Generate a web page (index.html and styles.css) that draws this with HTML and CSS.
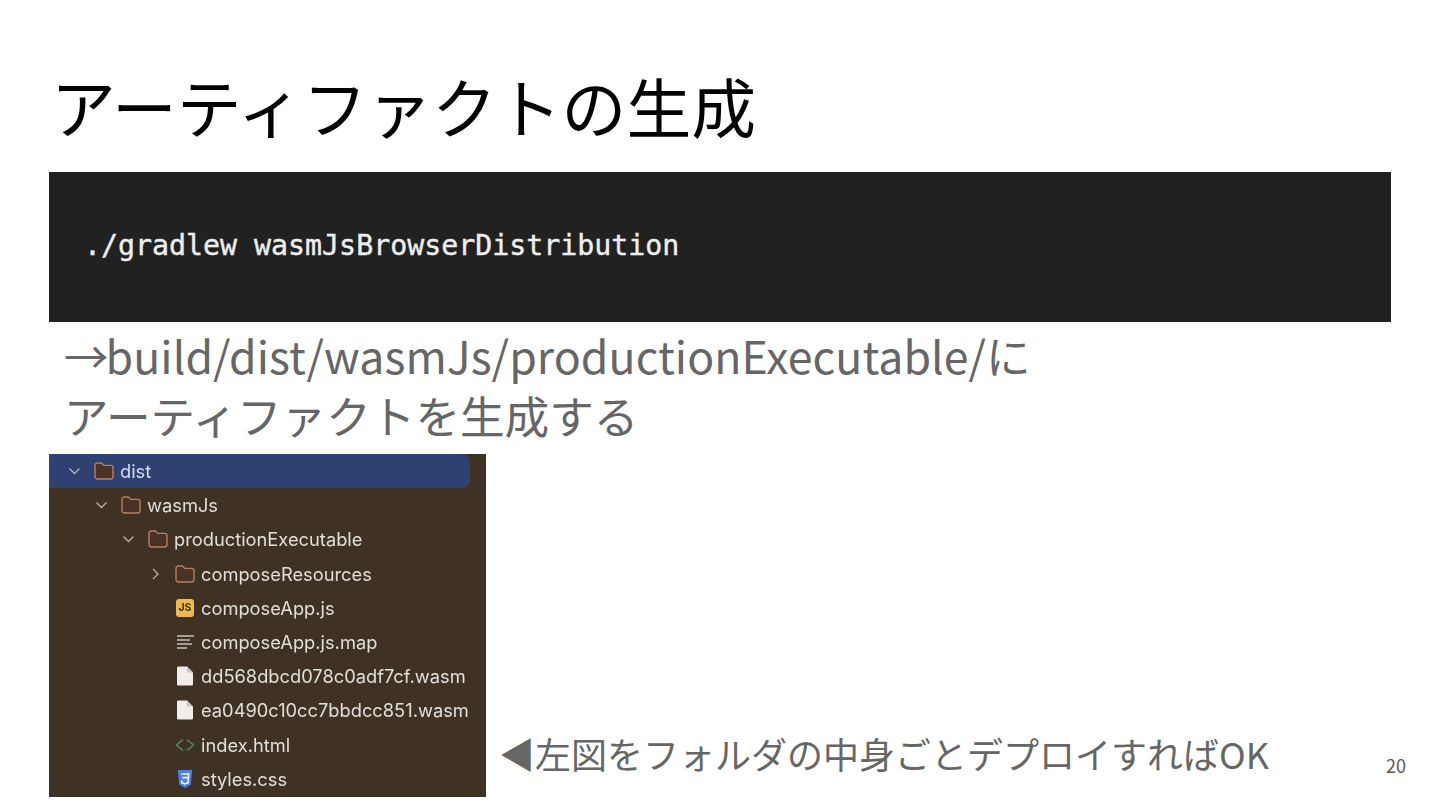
FILE: index.html
```html
<!DOCTYPE html>
<html lang="ja">
<head>
<meta charset="utf-8">
<title>アーティファクトの生成</title>
<link rel="stylesheet" href="styles.css">
</head>
<body>
<svg class="defs" width="0" height="0" aria-hidden="true">
  <defs>
    <symbol id="folder" viewBox="0 0 20 18"><path d="M1 3.500C1 2.100 2 1 3.400 1H7.400L9.800 3.400H16.800C18.200 3.400 19 4.400 19 5.600V14.600C19 16 18.200 17 16.800 17H3.400C2 17 1 16 1 14.600Z" fill="#4a3226" stroke="#b87f5f" stroke-width="1.400"/></symbol>
    <symbol id="down" viewBox="0 0 12 8"><path d="M1 1.500L6 6.500L11 1.500" fill="none" stroke="#b5b3ad" stroke-width="1.300"/></symbol>
    <symbol id="right" viewBox="0 0 8 12"><path d="M1.500 1L6.500 6L1.500 11" fill="none" stroke="#b5b3ad" stroke-width="1.300"/></symbol>
    <symbol id="file" viewBox="0 0 18 20" preserveAspectRatio="none"><path d="M1 2C1 1 1.600 .5 2.500 .5H11L17 6.500V18C17 19 16.400 19.500 15.500 19.500H2.500C1.600 19.500 1 19 1 18Z" fill="#efeeea"/><path d="M11 .5V6.500H17Z" fill="#c9c7c2"/></symbol>
  </defs>
</svg>
<main class="slide">
  <h1 class="title">アーティファクトの生成</h1>
  <div class="code"><code>./gradlew wasmJsBrowserDistribution</code></div>
  <p class="note">→<span class="path">build/dist/wasmJs/productionExecutable/</span>に<br>アーティファクトを生成する</p>
  <div class="bottom">
    <div class="tree">
      <div class="row l0 selected"><svg class="chev"><use href="#down"/></svg><svg class="icon"><use href="#folder"/></svg><span>dist</span></div>
      <div class="row l1"><svg class="chev"><use href="#down"/></svg><svg class="icon"><use href="#folder"/></svg><span>wasmJs</span></div>
      <div class="row l2"><svg class="chev"><use href="#down"/></svg><svg class="icon"><use href="#folder"/></svg><span>productionExecutable</span></div>
      <div class="row l3"><svg class="chev chev-right"><use href="#right"/></svg><svg class="icon"><use href="#folder"/></svg><span>composeResources</span></div>
      <div class="row l3"><i class="chev"></i><i class="icon js">JS</i><span>composeApp.js</span></div>
      <div class="row l3"><i class="chev"></i><svg class="icon" viewBox="0 0 20 18"><path d="M2 3H19M2 7H15M2 11H17M2 15H12" stroke="#c4c2bc" stroke-width="1.300"/></svg><span>composeApp.js.map</span></div>
      <div class="row l3"><i class="chev"></i><svg class="icon tall"><use href="#file"/></svg><span>dd568dbcd078c0adf7cf.wasm</span></div>
      <div class="row l3"><i class="chev"></i><svg class="icon tall"><use href="#file"/></svg><span>ea0490c10cc7bbdcc851.wasm</span></div>
      <div class="row l3"><i class="chev"></i><svg class="icon" viewBox="0 0 20 18"><path d="M8 3.500L1.500 9L8 14.500M12 3.500L18.500 9L12 14.500" fill="none" stroke="#4f8a55" stroke-width="1.600"/></svg><span>index.html</span></div>
      <div class="row l3"><i class="chev"></i><svg class="icon tall" viewBox="0 0 20 20"><path d="M2 0H18L16.500 16L10 20L3.500 16Z" fill="#4d7fe0"/><path d="M6 4.500H14L13.500 14L10 15.500L6.500 14L6.300 11.500M7 8.500H13.500" fill="none" stroke="#f1f3f8" stroke-width="1.800"/></svg><span>styles.css</span></div>
    </div>
    <p class="caption">◀左図をフォルダの中身ごとデプロイすればOK</p>
    <span class="page">20</span>
  </div>
</main>
</body>
</html>
```
FILE: styles.css
```css
* { box-sizing: border-box; }
html, body { margin: 0; padding: 0; background: #fff; }
body { font-family: "Noto Sans CJK JP", "Noto Sans", sans-serif; overflow: hidden; }
.defs { position: absolute; }

.slide {
  width: 1440px;
  height: 810px;
  padding: 0 49px;
  display: flex;
  flex-direction: column;
  background: #fff;
}
.title {
  margin: 0;
  height: 172px;
  padding: 59px 0 0 2px;
  font-size: 64.8px;
  line-height: 92px;
  font-weight: 400;
  color: #000;
  white-space: nowrap;
}
.code {
  height: 150px;
  flex: none;
  background: #212121;
  padding: 54px 0 0 35px;
  color: #eee;
}
.code code {
  display: block;
  font-family: "DejaVu Sans Mono", monospace;
  font-size: 28.25px;
  line-height: 40px;
  -webkit-text-stroke: 0.4px #eee;
}
.note {
  margin: 0;
  height: 132px;
  padding: 3px 0 0 15px;
  font-size: 44.6px;
  line-height: 60px;
  font-weight: 400;
  color: #666;
  white-space: nowrap;
}
.path {
  margin-left: -3px;
  letter-spacing: 0.06px;
}
.bottom {
  display: flex;
  align-items: flex-end;
  height: 343px;
  flex: none;
}
.tree {
  width: 437px;
  height: 343px;
  flex: none;
  background: #3f3124;
  font-family: "Inter", "Liberation Sans", sans-serif;
  font-size: 18.3px;
  color: #e1dfd9;
  overflow: hidden;
  filter: blur(0.4px);
}
.row {
  height: 34.2px;
  display: flex;
  align-items: center;
  white-space: nowrap;
}
.l0 { padding-left: 18px; }
.l1 { padding-left: 45px; }
.l2 { padding-left: 72px; }
.l3 { padding-left: 99px; }
.selected {
  width: 421px;
  background: #2f4170;
  border-radius: 0 8px 8px 0;
  color: #d5dcf0;
}
.chev {
  display: block;
  width: 27px;
  height: 8px;
  flex: none;
  padding-right: 12px;
}
.chev-right {
  height: 12px;
  padding: 0 15px 0 3px;
}
.icon {
  display: block;
  width: 20px;
  height: 18px;
  margin-right: 6px;
  flex: none;
  font-style: normal;
}
.tall {
  height: 20px;
  width: 18px;
  margin: 0 7px 0 1px;
}
.js {
  background: #eeb94f;
  border-radius: 3px;
  color: #3f3124;
  font-size: 10.5px;
  font-weight: 700;
  line-height: 18px;
  text-align: center;
  width: 18px;
  margin: 0 7px 0 1px;
}
.caption {
  margin: 0 0 18px 13px;
  font-size: 36px;
  line-height: 52px;
  font-weight: 400;
  color: #666;
  white-space: nowrap;
}
.page {
  margin: 0 -15px 20px auto;
  font-size: 18px;
  line-height: 24px;
  color: #595959;
}
```
